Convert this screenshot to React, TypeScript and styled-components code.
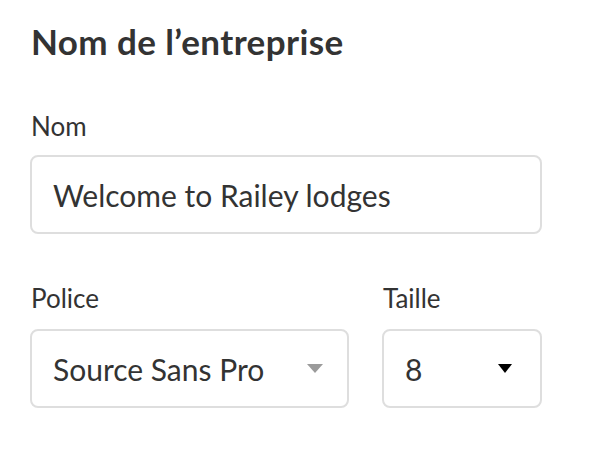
import React from "react";
import styled, { createGlobalStyle } from "styled-components";

const Global = createGlobalStyle`
  html, body { margin: 0; padding: 0; background: #fff; }
  body { font-family: Lato, "Open Sans", sans-serif; color: #333; }
`;

const Panel = styled.div`
  width: 512px;
  padding: 21px 0 0 30px;
  display: flex;
  flex-direction: column;
`;

const Title = styled.h2`
  margin: 0;
  font-size: 35px;
  line-height: 40px;
  font-weight: 700;
  color: #333;
  padding-left: 1px;
  letter-spacing: 0.4px;
`;

const Field = styled.div<{ $width: number }>`
  display: flex;
  flex-direction: column;
  width: ${(p) => p.$width}px;
`;

const Label = styled.label<{ $top: number; $bottom: number }>`
  margin-top: ${(p) => p.$top}px;
  margin-bottom: ${(p) => p.$bottom}px;
  font-size: 26px;
  line-height: 30px;
  color: #333;
  padding-left: 1px;
`;

const Box = styled.div<{ $right?: number }>`
  box-sizing: border-box;
  height: 79px;
  border: 2px solid #dedede;
  border-radius: 8px;
  display: flex;
  align-items: center;
  justify-content: space-between;
  padding: 0 ${(p) => p.$right ?? 30}px 0 21px;
  font-size: 30px;
  color: #333;
`;

const Row = styled.div`
  display: flex;
  gap: 33px;
`;

const Arrow = styled.span<{ $color: string; $w: number }>`
  width: 0;
  height: 0;
  border-left: ${(p) => p.$w / 2}px solid transparent;
  border-right: ${(p) => p.$w / 2}px solid transparent;
  border-top: 9px solid ${(p) => p.$color};
`;

export default function App() {
  return (
    <>
      <Global />
      <Panel>
        <Title>Nom de l’entreprise</Title>
        <Label $top={50} $bottom={14}>Nom</Label>
        <Box>Welcome to Railey lodges</Box>
        <Row>
          <Field $width={319}>
            <Label $top={49} $bottom={16}>Police</Label>
            <Box $right={24}>
              Source Sans Pro
              <Arrow $color="#9b9b9b" $w={16} />
            </Box>
          </Field>
          <Field $width={160}>
            <Label $top={49} $bottom={16}>Taille</Label>
            <Box $right={28}>
              8
              <Arrow $color="#000" $w={14} />
            </Box>
          </Field>
        </Row>
      </Panel>
    </>
  );
}
